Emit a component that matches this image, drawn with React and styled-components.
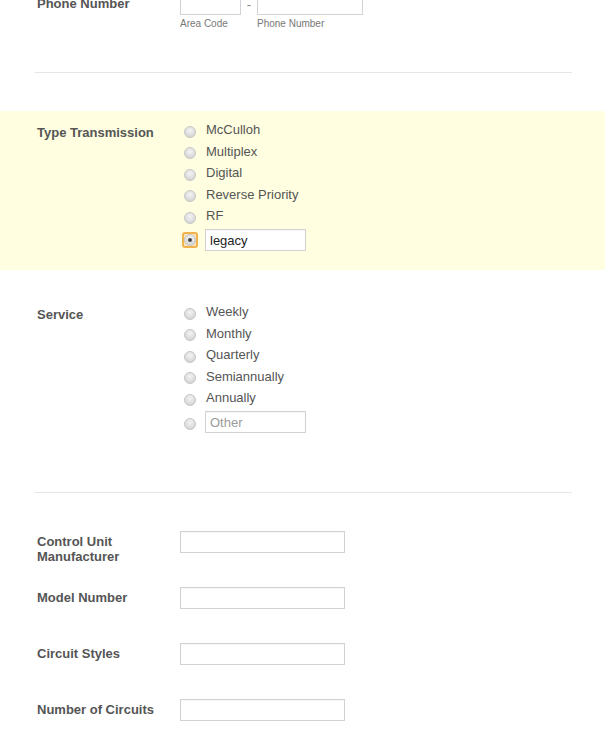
import React from "react";
import styled, { createGlobalStyle } from "styled-components";

const GlobalStyle = createGlobalStyle`
  html, body {
    margin: 0;
    background: #fff;
    overflow: hidden;
  }
  body {
    font-family: "Liberation Sans", Arial, sans-serif;
  }
`;

const Form = styled.div`
  width: 605px;
  margin-top: -20px;
`;

const Section = styled.div`
  display: flex;
  align-items: flex-start;
  box-sizing: border-box;
  padding: ${({ $pt }) => $pt}px 33px ${({ $pb }) => $pb}px 37px;
  background: ${({ $highlight }) => ($highlight ? "#fffee0" : "transparent")};
  ${({ $h }) => ($h ? `height: ${$h}px;` : "")}
`;

const Label = styled.div`
  width: 133px;
  padding-right: 10px;
  flex-shrink: 0;
  padding-top: ${({ $pt }) => $pt}px;
  font-size: 13px;
  font-weight: bold;
  line-height: 15px;
  color: #555;
`;

const Divider = styled.div`
  height: 1px;
  margin: ${({ $mt }) => $mt}px 33px ${({ $mb }) => $mb}px 35px;
  background: #e6e6e6;
`;

const Input = styled.input`
  box-sizing: border-box;
  width: ${({ $w }) => $w}px;
  height: 22px;
  margin: 0 0 0 ${({ $ml }) => $ml || 0}px;
  padding: 2px 4px;
  border: 1px solid #d2d2d2;
  border-radius: 0;
  box-shadow: inset 0 1px 1px rgba(0, 0, 0, 0.04);
  background: #fff;
  font-family: inherit;
  font-size: 13px;
  color: #222;
  outline: none;

  &::placeholder {
    color: #9a9a9a;
  }
`;

const PhoneGroup = styled.div`
  display: flex;
  align-items: flex-start;
`;

const PhonePart = styled.div`
  display: flex;
  flex-direction: column;
`;

const Dash = styled.span`
  width: 16px;
  padding-top: 1px;
  text-align: center;
  font-size: 13px;
  line-height: 22px;
  color: #888;
`;

const SubLabel = styled.span`
  margin-top: 3px;
  font-size: 10px;
  line-height: 12px;
  color: #777;
`;

const Options = styled.div`
  display: flex;
  flex-direction: column;
  padding-top: 1px;
`;

const Option = styled.label`
  display: flex;
  align-items: center;
  height: ${({ $last }) => ($last ? "22px" : "21.5px")};
  padding-top: ${({ $last }) => ($last ? "2.5px" : "0")};
  font-size: 13px;
  color: #555;
`;

const Radio = styled.span`
  position: relative;
  display: inline-block;
  box-sizing: border-box;
  width: 12px;
  height: 12px;
  border-radius: 50%;
  border: 1px solid #c6c6c6;
  background: radial-gradient(circle at 50% 35%, #f4f4f4 0%, #dcdcdc 60%, #cbcbcb 100%);

  &::after {
    content: "";
    display: ${({ $checked }) => ($checked ? "block" : "none")};
    position: absolute;
    left: 3px;
    top: 3px;
    width: 4px;
    height: 4px;
    border-radius: 50%;
    background: #444;
  }
`;

const RadioSlot = styled.span`
  display: inline-flex;
  align-items: center;
  justify-content: center;
  width: 12px;
  height: 12px;
  margin: ${({ $focused }) => ($focused ? "0" : "4px")} 10px 0 4px;
`;

const FocusRing = styled.span`
  display: inline-flex;
  align-items: center;
  justify-content: center;
  flex-shrink: 0;
  width: 16px;
  height: 16px;
  box-sizing: border-box;
  border: 2px solid #f1b24e;
  border-radius: 3px;
  background: #fbe6bd;
`;

const RadioOption = ({ children, checked, focused, last }) => (
  <Option $last={last}>
    <RadioSlot $focused={focused}>
      {focused ? (
        <FocusRing>
          <Radio $checked={checked} />
        </FocusRing>
      ) : (
        <Radio $checked={checked} />
      )}
    </RadioSlot>
    {children}
  </Option>
);

const transmissions = ["McCulloh", "Multiplex", "Digital", "Reverse Priority", "RF"];
const services = ["Weekly", "Monthly", "Quarterly", "Semiannually", "Annually"];
const textFields = ["Control Unit Manufacturer", "Model Number", "Circuit Styles", "Number of Circuits"];

export default function App() {
  return (
    <>
      <GlobalStyle />
      <Form>
        <Section $pt={13} $pb={0}>
          <Label $pt={2.5}>Phone Number</Label>
          <PhoneGroup>
            <PhonePart>
              <Input $w={61} />
              <SubLabel>Area Code</SubLabel>
            </PhonePart>
            <Dash>-</Dash>
            <PhonePart>
              <Input $w={106} />
              <SubLabel>Phone Number</SubLabel>
            </PhonePart>
          </PhoneGroup>
        </Section>

        <Divider $mt={42} $mb={38} />

        <Section $highlight $pt={7} $pb={19}>
          <Label $pt={6.5}>Type Transmission</Label>
          <Options>
            {transmissions.map((t) => (
              <RadioOption key={t}>{t}</RadioOption>
            ))}
            <RadioOption last checked focused>
              <Input $w={101} $ml={-1} defaultValue="legacy" />
            </RadioOption>
          </Options>
        </Section>

        <Section $pt={30} $pb={19}>
          <Label $pt={6.5}>Service</Label>
          <Options>
            {services.map((s) => (
              <RadioOption key={s}>{s}</RadioOption>
            ))}
            <RadioOption last>
              <Input $w={101} $ml={-1} placeholder="Other" />
            </RadioOption>
          </Options>
        </Section>

        <Divider $mt={40} $mb={21} />

        {textFields.map((f) => (
          <Section key={f} $pt={17} $pb={0} $h={56}>
            <Label $pt={2.5}>{f}</Label>
            <Input $w={165} />
          </Section>
        ))}
      </Form>
    </>
  );
}
